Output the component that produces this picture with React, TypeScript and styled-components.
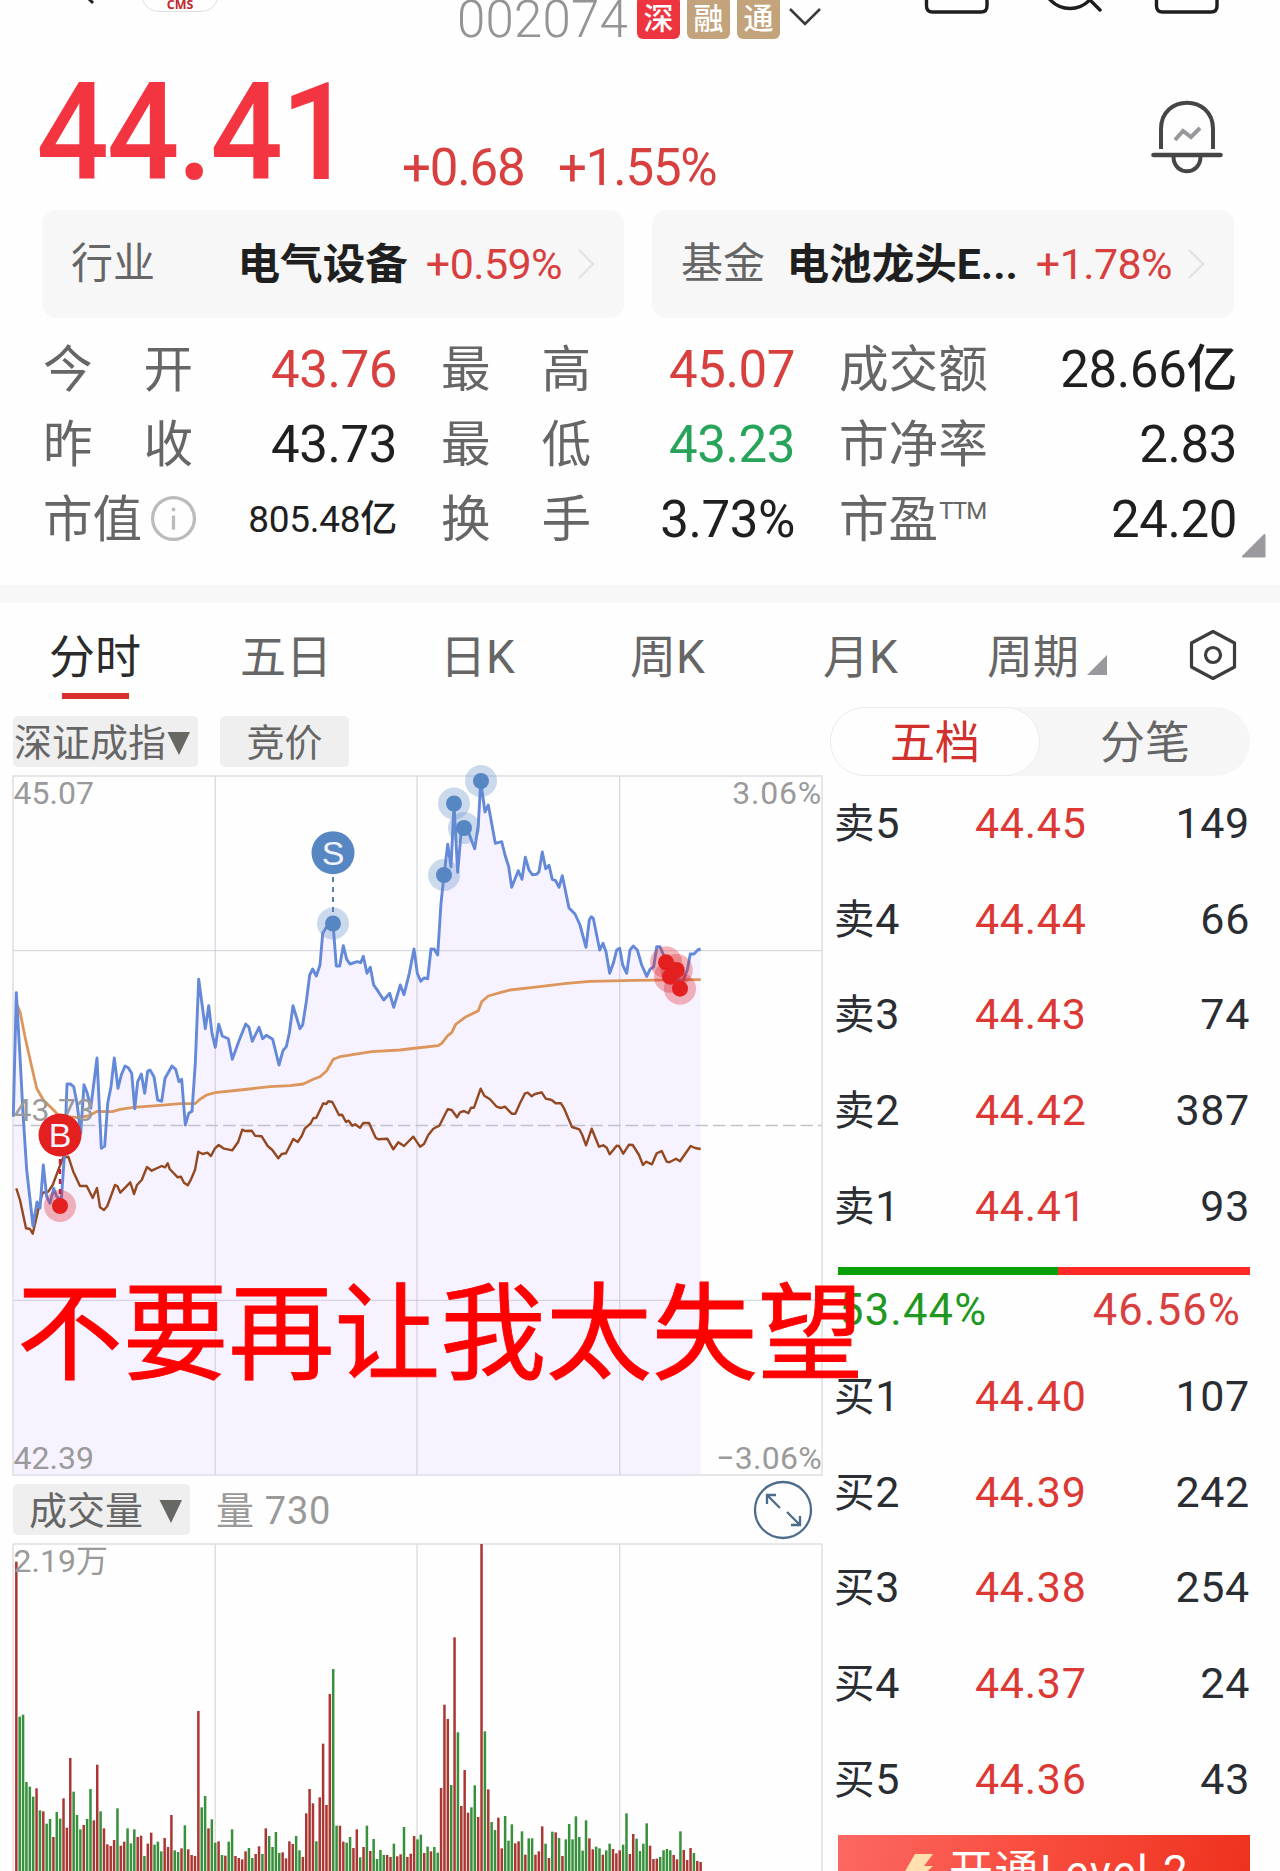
import React from "react";
import styled, { createGlobalStyle } from "styled-components";

const Global = createGlobalStyle`
  body { margin: 0; background: #fefefe; }
  * { box-sizing: border-box; }
`;

const RED = "#d8403f";
const GREEN = "#27a35a";
const INK = "#1f1f1f";

const Page = styled.main`
  position: relative;
  width: 1280px;
  height: 1871px;
  overflow: hidden;
  display: flex;
  flex-direction: column;
  background: #fefefe;
  font-family: Roboto, "Noto Sans CJK SC", sans-serif;
  line-height: 1;
  white-space: nowrap;
`;

/* ---------- top bar ---------- */
const TopBar = styled.header`
  display: flex;
  align-items: flex-start;
  height: 45px;
  overflow: hidden;
  padding-left: 82px;
  flex: none;
`;
const Logo = styled.div`
  width: 78px;
  height: 54px;
  margin: -42px 0 0 43px;
  border: 1px solid #ddd;
  border-radius: 18px;
  display: flex;
  justify-content: center;
  align-items: flex-end;
  padding-bottom: 1px;
  font: 700 12.5px/11px "Open Sans", sans-serif;
  color: #c0282d;
`;
const Code = styled.div`
  width: 180px;
  margin: -6px 0 0 238px;
  font-size: 51px;
  font-weight: 330;
  letter-spacing: 0.2px;
  color: #949496;
`;
const Badge = styled.div<{ $bg: string }>`
  width: 43px;
  height: 43px;
  margin: -4px 7px 0 0;
  border-radius: 6px;
  background: ${(p) => p.$bg};
  color: #fff;
  font-size: 30px;
  font-weight: 500;
  display: flex;
  align-items: center;
  justify-content: center;
  padding-top: 2px;
`;
const TopIcons = styled.svg`
  margin-left: auto;
  flex: none;
`;

/* ---------- quote ---------- */
const Quote = styled.section`
  display: flex;
  height: 165px;
  flex: none;
  padding: 19px 57px 0 36px;
`;
const Price = styled.div`
  width: 366px;
  padding-top: 1px;
  font-size: 136px;
  font-weight: 500;
  letter-spacing: -2.4px;
  color: #f23540;
  transform: scaleX(0.94);
  transform-origin: 4px 0;
`;
const Change = styled.div<{ $w: number }>`
  width: ${(p) => p.$w}px;
  padding-top: 78px;
  font-size: 51px;
  font-weight: 450;
  letter-spacing: -1.2px;
  color: ${RED};
`;
const Bell = styled.svg`
  margin: 35px 0 0 auto;
`;

const Cards = styled.section`
  display: flex;
  gap: 28px;
  height: 108px;
  padding: 0 46px 0 42px;
  flex: none;
`;
const Card = styled.div`
  flex: 1;
  display: flex;
  align-items: center;
  border-radius: 14px;
  background: #f7f7f7;
  padding: 0 28px 0 29px;
  font-size: 42px;
`;
const CardLabel = styled.span`
  color: #666;
`;
const CardName = styled.span`
  margin-left: auto;
  font-size: 42.6px;
  font-weight: 700;
  color: #1f1f1f;
`;
const CardPct = styled.span`
  font-size: 43px;
  font-weight: 450;
  letter-spacing: -0.6px;
  color: ${RED};
  margin: 0 16px 0 18px;
`;

/* ---------- stats ---------- */
const Stats = styled.section`
  height: 267px;
  flex: none;
  padding: 13px 43px 0 43px;
  display: grid;
  grid-template-columns: 354px 354px 1fr;
  grid-auto-rows: 75px;
  column-gap: 44px;
  position: relative;
`;
const Stat = styled.div`
  display: flex;
  align-items: center;
  justify-content: space-between;
`;
const StatLabel = styled.span<{ $wide?: boolean }>`
  width: 150px;
  display: flex;
  justify-content: ${(p) => (p.$wide ? "space-between" : "flex-start")};
  align-items: center;
  font-size: 49.6px;
  padding-top: 5px;
  color: #666;
`;
const StatValue = styled.span<{ $c: string; $small?: boolean }>`
  font-size: ${(p) => (p.$small ? 37 : 51)}px;
  font-weight: 450;
  letter-spacing: ${(p) => (p.$small ? -0.3 : -0.4)}px;
  padding-top: 1px;
  color: ${(p) => p.$c};
`;
const Sup = styled.span`
  font-size: 24px;
  letter-spacing: -0.9px;
  margin: -21px 0 0 1px;
`;
const InfoIcon = styled.svg`
  margin: -5px 0 0 8px;
  flex: none;
`;
const Corner = styled.svg`
  position: absolute;
  right: 14px;
  top: 215px;
`;
const Divider = styled.div`
  height: 18px;
  flex: none;
  background: #f7f7f7;
`;

/* ---------- tabs ---------- */
const Tabs = styled.nav`
  height: 104px;
  flex: none;
  display: flex;
  padding-left: 49px;
  font-size: 46px;
  color: #666;
`;
const Tab = styled.div<{ $active?: boolean; $w: number }>`
  width: ${(p) => p.$w}px;
  display: flex;
  flex-direction: column;
  padding-top: 31px;
  color: ${(p) => (p.$active ? "#2b2b2b" : "#666")};
`;
const Underline = styled.div`
  width: 67px;
  height: 6px;
  margin: 13px 0 0 13px;
  background: #d9302c;
`;
const Period = styled.div`
  display: flex;
  width: 200px;
  padding-top: 31px;
`;
const PeriodMark = styled.svg`
  margin-left: 7px;
`;

/* ---------- main ---------- */
const Main = styled.section`
  flex: 1;
  min-height: 0;
  display: grid;
  grid-template-columns: 809px 420px;
  column-gap: 8px;
  padding-left: 13px;
`;
const Column = styled.div`
  display: flex;
  flex-direction: column;
  min-height: 0;
`;
const ChipRow = styled.div`
  display: flex;
  align-items: center;
  height: 51px;
  margin: 9px 0;
  flex: none;
`;
const Chip = styled.div<{ $w: number; $pad?: number }>`
  width: ${(p) => p.$w}px;
  height: 51px;
  margin-right: 22px;
  border-radius: 5px;
  background: #efefef;
  color: #666;
  font-size: 38px;
  display: flex;
  align-items: center;
  justify-content: ${(p) => (p.$pad === undefined ? "center" : "flex-start")};
  padding: 3px 0 0 ${(p) => p.$pad ?? 0}px;
`;
const VolNow = styled.span`
  font-size: 38px;
  color: #999;
  letter-spacing: 0.7px;
  margin: 2px auto 0 4px;
`;
const Expand = styled.svg`
  margin-right: 9px;
`;
const Chart = styled.svg`
  display: block;
  flex: none;
  overflow: visible;
`;
const AxisText = styled.text`
  font-family: Roboto, "Noto Sans CJK SC", sans-serif;
  font-size: 32px;
  fill: #9a9a9a;
`;
const MarkText = styled.text`
  font-family: "Liberation Sans", sans-serif;
  font-size: 34px;
  fill: #f3f3ff;
  text-anchor: middle;
`;

const Segmented = styled.div`
  display: flex;
  height: 69px;
  border-radius: 35px;
  background: #f6f6f6;
  flex: none;
`;
const Segment = styled.div<{ $active?: boolean }>`
  flex: 1;
  display: flex;
  align-items: center;
  justify-content: center;
  padding-top: 3px;
  border-radius: 35px;
  font-size: 45px;
  color: ${(p) => (p.$active ? "#d2302c" : "#666")};
  background: ${(p) => (p.$active ? "#fefefe" : "transparent")};
  border: 1.5px solid ${(p) => (p.$active ? "#ececec" : "transparent")};
`;
const Book = styled.div`
  display: flex;
  flex-direction: column;
  flex: none;
`;
const BookRow = styled.div`
  height: 95.6px;
  display: flex;
  align-items: center;
  padding: 0 0 0 4px;
  font-size: 43px;
  letter-spacing: 0.7px;
  color: #2a2d32;
`;
const Side = styled.span`
  width: 141px;
  font-size: 40.5px;
`;
const Digit = styled.span`
  font-size: 43px;
`;
const BookPrice = styled.span`
  color: #dc3935;
`;
const Amount = styled.span`
  margin-left: auto;
`;
const RatioBar = styled.div`
  display: flex;
  height: 8px;
  margin: 13px 0 1px 8px;
  flex: none;
`;
const RatioPart = styled.div<{ $c: string; $grow: number }>`
  flex: ${(p) => p.$grow} 0 0;
  background: ${(p) => p.$c};
`;
const Ratios = styled.div`
  display: flex;
  justify-content: space-between;
  align-items: center;
  height: 73px;
  padding: 0 9px 3px 9px;
  flex: none;
  font-size: 43.5px;
  letter-spacing: 1.2px;
`;
const RatioText = styled.span<{ $c: string }>`
  color: ${(p) => p.$c};
`;
const Banner = styled.div`
  margin: 8px 0 0 8px;
  height: 80px;
  flex: none;
  display: flex;
  padding: 15px 0 0 64px;
  font-size: 44px;
  color: #fff;
  background: linear-gradient(100deg, #fb6862 0%, #f94e40 45%, #ee311d 100%);
`;
const BannerText = styled.span`
  margin-left: 15px;
  letter-spacing: 1.5px;
`;

const Caption = styled.div`
  position: absolute;
  left: 17px;
  top: 1283px;
  font-size: 105.8px;
  font-family: "Noto Sans CJK SC", sans-serif;
  line-height: 84px;
  color: #f00;
  -webkit-text-stroke: 0.9px #f00;
`;

/* ---------- chart data ---------- */
type Pt = [number, number];
/* Samples are stored in thirds of a pixel, relative to a tile origin. */
const tile = (dx: number, dy: number, s: string): Pt[] =>
  s.trim().split(/\s+/).map((p) => {
    const [x, y] = p.split(",").map(Number);
    return [(x + dx) / 3, (y + dy) / 3];
  });
const path = (pts: Pt[]) => "M" + pts.map(([x, y]) => `${x.toFixed(1)} ${y.toFixed(1)}`).join("L");

const price = [
  ...tile(0, 2910, "40,440 49,68 60,260 69,430 80,600 99,768 111,696 120,714 130,585 140,680 150,700 161,655 170,680 184,690 193,560 201,342 211,342 221,350 231,400 242,490 252,344 262,370 272,415 291,264 304,535 314,528 323,400 333,350 343,264 354,355 364,315 375,288 385,293 395,310 404,416 413,335 424,312 434,370 443,303 450,300 462,320 473,390 485,394 495,325 516,288 527,298 537,335 545,328 556,465 566,430 576,424 586,280 596,28 616,176 626,107 636,190 646,232 656,163 667,198 685,206 697,268 717,212 737,162 747,172 757,214 777,172 788,206 799,196 818,208 837,285 849,242 859,230 868,190 879,107 889,140 900,176 908,164 919,95"),
  ...tile(0, 1770, "929,1155 938,1137 949,1158 960,1125 968,1030 980,1010 999,1000 1009,1128 1019,1128 1030,1067 1040,1108 1050,1122 1072,1115 1082,1118 1090,1099 1101,1150 1111,1132 1121,1185"),
  ...tile(0, 2910, "1133,62 1151,90 1169,70 1181,112 1201,45"),
  ...tile(1200, 2250, "12,734 28,670 42,597 52,670 62,694 72,684 83,686 93,597 103,598 113,615 123,460 132,376 143,283 153,350 162,162 173,367 183,250 191,233 205,245 224,296 235,225 242,95 255,186 265,165 286,280 305,275 315,315 326,350 335,412 355,362 366,388 376,322 387,360 397,374 410,373 417,365 427,306 437,356 447,346 457,388 467,392 477,412 487,377 507,474 525,492 540,525 558,592 568,510 574,500 580,505 599,600 609,580 618,605 629,670 640,640 650,600 659,595 668,645 680,670 690,600 700,588 712,600 725,645 740,679 750,658 761,650 770,590 780,590 800,637 810,680 830,660 840,716 850,690 862,660 871,612 882,612 893,600 902,597"),
];
const average = [
  ...tile(0, 2910, "49,100 60,125 75,200 95,290 110,355 130,390 155,415 175,435 200,440 230,442 265,438 292,424 337,425 360,418 400,412 480,406 540,401 585,401 600,388 620,375 645,368 720,360 810,350 870,347 910,342 940,328 960,320 980,302 1000,268 1020,260 1115,245 1200,240 1250,234"),
  ...tile(1200, 2250, "115,887 125,880 143,857 155,848 167,823 195,802 235,782 245,755 265,738 300,728 330,720 400,712 500,700 570,694 700,691 902,689"),
];
const index = [
  ...tile(0, 2910, "49,655 60,690 78,775 90,777 98,791 110,740 120,695 128,668 145,665 158,645 175,600 190,562 205,560 220,605 240,648 260,648 278,684 291,654 300,712 312,720 322,708 345,645 352,648 361,668 391,637 402,672 411,645 425,630 441,591 455,602 485,588 495,592 503,580 509,597 533,622 543,620 552,638 563,646 573,628 585,600 595,545 608,552 622,548 633,558 645,535 656,525 670,535 697,541 715,515 727,479 735,483 755,482 765,497 785,499 803,528 817,540 835,565 845,552 858,550 880,507 893,516 905,498 915,475 932,460 940,445 949,443 970,400 979,402 985,394 997,396 1017,435 1026,434 1038,456 1046,452 1057,467 1065,463 1080,473 1090,459 1107,459 1127,503 1135,508 1162,506 1180,538 1195,517"),
  ...tile(1200, 2250, "12,1188 40,1160 60,1190 72,1182 85,1155 100,1136 118,1127 143,1078 155,1080 171,1102 180,1087 192,1083 205,1090 213,1073 222,1073 242,1016 253,1037 270,1048 290,1070 302,1074 315,1070 335,1091 346,1091 360,1060 375,1030 383,1028 395,1039 405,1032 425,1027 437,1046 455,1050 467,1060 483,1060 492,1075 516,1131 538,1138 547,1155 558,1186 575,1136 597,1190 610,1186 620,1193 629,1213 650,1187 657,1188 670,1211 687,1184 698,1185 717,1215 729,1245 738,1235 756,1243 770,1210 785,1203 800,1235 808,1237 828,1226 840,1234 872,1188 885,1194 902,1197"),
];
const volume =
  "r65 g530 g524 g726 g740 g770 r745 g811 r814 g851 g837 r891 g816 g836 r775 r863 r654 g755 g825 g868 r855 g837 g747 r841 r674 g814 r865 r913 r918 r900 g805 r917 r905 g865 g910 g868 r891 r887 g948 r911 r878 g914 g905 g934 r894 r921 r825 g931 g936 r925 g856 r928 r945 r948 r513 g802 g768 r865 g838 g908 r904 g945 r947 g905 g868 r948 r954 r958 r934 g924 g954 r942 r919 g942 r865 g888 g921 g876 g939 r937 r955 r904 r912 g888 g931 r951 r820 r747 r790 g904 r772 r611 r795 r462 g387 g857 r857 r905 g908 g891 r924 r868 g952 r921 g857 r933 g897 g957 g930 g945 r945 r951 g911 r949 r943 g861 r951 r941 r888 g898 g884 r939 g920 r934 g921 g938 r744 r494 r537 g735 r292 g577 r798 r690 r818 g802 g736 r831 r12 g574 r748 g846 g870 r833 r925 g828 g902 g853 r910 r904 g874 r944 g895 g895 r944 r934 r859 g911 r954 g875 r877 g894 r948 g898 g852 g898 g829 g891 g932 g841 r895 r928 g920 g925 r944 g931 g911 r927 r940 r931 g914 g820 r942 r882 g896 g933 g911 g850 r917 r957 r956 g951 g931 g927 g931 r945 r958 g874 r930 r960 r924 g939 r963 r966".split(" ");

const soldDots: Pt[] = [[333, 923.5], [444, 875], [454, 803.5], [464, 828], [481, 781]];
const boughtDots: Pt[] = [[60, 1206], [666, 962.3], [676.7, 970], [670, 976.7], [680, 988.7]];
const columnsX = [215.3, 417, 619.7];

const PriceChart = () => (
  <Chart width="809" height="699" viewBox="13 776 809 699">
    <path d={path(price) + "L700.7 1475L13.3 1475Z"} fill="#f7f2ff" />
    <g stroke="#b9bcc6" strokeOpacity="0.55" strokeWidth="1.3">
      {columnsX.map((x) => <line key={x} x1={x} x2={x} y1="776" y2="1475" />)}
      <line x1="13" x2="822" y1="950.7" y2="950.7" />
      <line x1="13" x2="822" y1="1300.3" y2="1300.3" />
      <line x1="13" x2="822" y1="1125.5" y2="1125.5" strokeDasharray="12.5 5" strokeOpacity="0.9" />
    </g>
    <rect x="13" y="776" width="809" height="699" fill="none" stroke="#dcdce2" strokeWidth="1.4" />
    <path d={path(index)} fill="none" stroke="#93481f" strokeWidth="2.4" strokeLinejoin="round" />
    <path d={path(average)} fill="none" stroke="#dc965c" strokeWidth="2.8" strokeLinejoin="round" />
    <path d={path(price)} fill="none" stroke="#6489d8" strokeWidth="2.9" strokeLinejoin="round" />
    <AxisText x="13.500" y="803.500">45.07</AxisText>
    <AxisText x="822" y="803.500" textAnchor="end" letterSpacing="0.8">3.06%</AxisText>
    <AxisText x="13.500" y="1120.500">43.73</AxisText>
    <AxisText x="13.500" y="1468.500">42.39</AxisText>
    <AxisText x="822" y="1468.500" textAnchor="end" letterSpacing="0.3">−3.06%</AxisText>
    {soldDots.map(([x, y]) => <circle key={x} cx={x} cy={y} r="16" fill="#5f8ccb" fillOpacity="0.32" />)}
    {boughtDots.map(([x, y]) => <circle key={x} cx={x} cy={y} r="16" fill="#e02028" fillOpacity="0.32" />)}
    {soldDots.map(([x, y]) => <circle key={x} cx={x} cy={y} r="8" fill="#5787c3" />)}
    {boughtDots.map(([x, y]) => <circle key={x} cx={x} cy={y} r="8" fill="#e3201f" />)}
    <line x1="333" x2="333" y1="877" y2="916" stroke="#5580b5" strokeWidth="2" strokeDasharray="5 5" />
    <line x1="60" x2="60" y1="1159" y2="1198" stroke="#c81e3c" strokeWidth="2.4" strokeDasharray="5 5" />
    <circle cx="333" cy="852.7" r="21.5" fill="#5787c3" />
    <MarkText x="333" y="864.500">S</MarkText>
    <circle cx="60" cy="1135" r="21.5" fill="#e3201f" />
    <MarkText x="60" y="1146.500">B</MarkText>
  </Chart>
);

const VolumeChart = () => (
  <Chart width="809" height="327" viewBox="13 1544 809 327">
    <g stroke="#e0dee0" strokeWidth="1.5">
      {[13, ...columnsX, 822].map((x) => <line key={x} x1={x} x2={x} y1="1544" y2="1871" />)}
      <line x1="13" x2="822" y1="1544" y2="1544" />
    </g>
    {volume.map((v, i) => {
      const y = 1540 + Number(v.slice(1)) / 3;
      return (
        <rect key={i} x={16.33 + i * 3.371 - 1.25} y={y} width="2.5" height={1871 - y}
          fill={v[0] === "r" ? "#ab3733" : "#37903b"} />
      );
    })}
    <AxisText x="13.500" y="1572">2.19万</AxisText>
  </Chart>
);

const Chevron = () => (
  <svg width="18" height="32" viewBox="0 0 18 32">
    <path d="M1 2L15 16L1 30" fill="none" stroke="#e2e2e6" strokeWidth="2.2" />
  </svg>
);
const Caret = ({ gap }: { gap: number }) => (
  <svg width={24 + gap} height="24" viewBox={`${-gap} 0 ${24 + gap} 24`}>
    <path d="M0.5 1H23L12 24Z" fill="#666864" />
  </svg>
);

const stats: { label: string; value: string; c?: string; kind?: string }[] = [
  { label: "今开", value: "43.76", c: RED, kind: "wide" },
  { label: "最高", value: "45.07", c: RED, kind: "wide" },
  { label: "成交额", value: "28.66亿" },
  { label: "昨收", value: "43.73", kind: "wide" },
  { label: "最低", value: "43.23", c: GREEN, kind: "wide" },
  { label: "市净率", value: "2.83" },
  { label: "市值", value: "805.48亿", kind: "info" },
  { label: "换手", value: "3.73%", kind: "wide" },
  { label: "市盈", value: "24.20", kind: "ttm" },
];
const sells = [["5", "44.45", "149"], ["4", "44.44", "66"], ["3", "44.43", "74"], ["2", "44.42", "387"], ["1", "44.41", "93"]];
const buys = [["1", "44.40", "107"], ["2", "44.39", "242"], ["3", "44.38", "254"], ["4", "44.37", "24"], ["5", "44.36", "43"]];

const OrderRows = ({ side, rows }: { side: string; rows: string[][] }) => (
  <Book>
    {rows.map(([n, p, a]) => (
      <BookRow key={n}>
        <Side>{side}<Digit>{n}</Digit></Side>
        <BookPrice>{p}</BookPrice>
        <Amount>{a}</Amount>
      </BookRow>
    ))}
  </Book>
);

export default function App() {
  return (
    <Page>
      <Global />
      <TopBar>
        <svg width="16" height="6" viewBox="0 0 16 6"><path d="M4 -4L11 3" stroke="#222" strokeWidth="3" /></svg>
        <Logo>CMS</Logo>
        <Code>002074</Code>
        <Badge $bg="#ee343f">深</Badge>
        <Badge $bg="#c2a37b">融</Badge>
        <Badge $bg="#c2a37b">通</Badge>
        <svg width="36" height="30" viewBox="0 0 36 30">
          <path d="M3 9L18 24L33 9" fill="none" stroke="#3a3a3a" strokeWidth="2.6" />
        </svg>
        <TopIcons width="360" height="30" viewBox="920 0 360 30" fill="none" stroke="#1d1d1f" strokeWidth="3.4" strokeLinecap="round">
          <path d="M926.5 -5V6Q926.5 12 932.5 12H981Q987 12 987 6V-5" />
          <circle cx="1070" cy="-18.500" r="27" />
          <path d="M1088 -2L1100 10" />
          <path d="M1156.5 -5V6Q1156.5 12 1162.5 12H1211Q1217 12 1217 6V-5" />
        </TopIcons>
      </TopBar>
      <Quote>
        <Price>44.41</Price>
        <Change $w={156}>+0.68</Change>
        <Change $w={170}>+1.55%</Change>
        <Bell width="72" height="76" viewBox="0 0 72 76" fill="none" stroke="#454746" strokeWidth="4">
          <path d="M10 50V30C10 -5 62 -5 62 30V50" />
          <path d="M2.500 56H69.500" strokeLinecap="round" strokeWidth="4.600" />
          <path d="M22.500 58C23 77 49 77 49.500 58" />
          <path d="M24 41L32 32L40 38L49 29" stroke="#98989c" />
        </Bell>
      </Quote>
      <Cards>
        <Card>
          <CardLabel>行业</CardLabel>
          <CardName>电气设备</CardName>
          <CardPct>+0.59%</CardPct>
          <Chevron />
        </Card>
        <Card>
          <CardLabel>基金</CardLabel>
          <CardName>电池龙头E...</CardName>
          <CardPct>+1.78%</CardPct>
          <Chevron />
        </Card>
      </Cards>
      <Stats>
        {stats.map((s) => (
          <Stat key={s.label}>
            <StatLabel $wide={s.kind === "wide"}>
              {s.kind === "wide" ? s.label.split("").map((ch) => <span key={ch}>{ch}</span>) : s.label}
              {s.kind === "info" && (
                <InfoIcon width="47" height="47" viewBox="0 0 46 46" fill="none" stroke="#bcbabd" strokeWidth="3.2">
                  <circle cx="23" cy="23" r="20.500" />
                  <path d="M23 20V34M23 12.500V16" />
                </InfoIcon>
              )}
              {s.kind === "ttm" && <Sup>TTM</Sup>}
            </StatLabel>
            <StatValue $c={s.c ?? INK} $small={s.kind === "info"}>{s.value}</StatValue>
          </Stat>
        ))}
        <Corner width="25" height="25" viewBox="0 0 25 25">
          <path d="M2 23.500L23.500 2V23.500Z" fill="#9b999d" stroke="#9b999d" strokeWidth="2" strokeLinejoin="round" />
        </Corner>
      </Stats>
      <Divider />
      <Tabs>
        <Tab $active $w={191}>分时<Underline /></Tab>
        <Tab $w={200}>五日</Tab>
        <Tab $w={190}>日K</Tab>
        <Tab $w={193}>周K</Tab>
        <Tab $w={164}>月K</Tab>
        <Period>
          周期
          <PeriodMark width="22" height="44" viewBox="0 0 22 44"><path d="M1 41L21 21V41Z" fill="#9b999d" /></PeriodMark>
        </Period>
        <svg width="52" height="104" viewBox="-1 0 52 104" fill="none" stroke="#3c3e3d" strokeWidth="3.200" strokeLinejoin="round">
          <path d="M25 28.500L46.500 40V64L25 75.500L3.500 64V40Z" />
          <circle cx="25" cy="52" r="7.500" />
        </svg>
      </Tabs>
      <Main>
        <Column>
          <ChipRow>
            <Chip $w={185} $pad={1}>深证成指<Caret gap={1} /></Chip>
            <Chip $w={129}>竞价</Chip>
          </ChipRow>
          <PriceChart />
          <ChipRow>
            <Chip $w={177} $pad={16}>成交量<Caret gap={16} /></Chip>
            <VolNow>量 730</VolNow>
            <Expand width="60" height="60" viewBox="0 0 60 60" fill="none" stroke="#4d6c8b" strokeWidth="2.300">
              <circle cx="30" cy="30" r="28" />
              <path d="M14 24V15H23M15 16L27 28M47 36V45H38M46 44L34 32" />
            </Expand>
          </ChipRow>
          <VolumeChart />
        </Column>
        <Column>
          <Segmented>
            <Segment $active>五档</Segment>
            <Segment>分笔</Segment>
          </Segmented>
          <OrderRows side="卖" rows={sells} />
          <RatioBar>
            <RatioPart $c="#08a008" $grow={53.44} />
            <RatioPart $c="#ff2a26" $grow={46.56} />
          </RatioBar>
          <Ratios>
            <RatioText $c="#1f981f">53.44%</RatioText>
            <RatioText $c={RED}>46.56%</RatioText>
          </Ratios>
          <OrderRows side="买" rows={buys} />
          <Banner>
            <svg width="32" height="44" viewBox="0 0 32 44"><path d="M13 4H31L22 16H31L4 42L12 23H2Z" fill="#ffe0ae" /></svg>
            <BannerText>开通Level-2</BannerText>
          </Banner>
        </Column>
      </Main>
      <Caption>不要再让我太失望</Caption>
    </Page>
  );
}
